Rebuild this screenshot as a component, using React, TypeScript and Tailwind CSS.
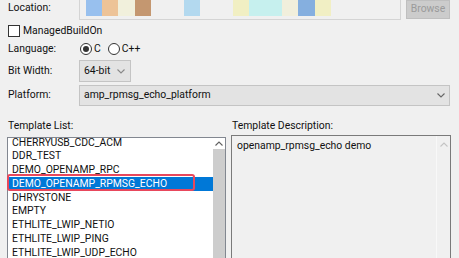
const templates = [
  "CHERRYUSB_CDC_ACM",
  "DDR_TEST",
  "DEMO_OPENAMP_RPC",
  "DEMO_OPENAMP_RPMSG_ECHO",
  "DHRYSTONE",
  "EMPTY",
  "ETHLITE_LWIP_NETIO",
  "ETHLITE_LWIP_PING",
  "ETHLITE_LWIP_UDP_ECHO",
];

// blurred path blocks in the location field: [width, colour]
const pathBlocks: [number, string][] = [
  [16, "#98c0ee"],
  [16, "#edc397"],
  [17, "#f1f0dc"],
  [16, "#c49770"],
  [33, "transparent"],
  [16, "#b3d9ef"],
  [33, "transparent"],
  [16, "#f1efc3"],
  [33, "#c6f0ee"],
  [16, "#f1efdc"],
  [17, "#85afdf"],
  [16, "#f1efc4"],
];

function Chevron({ up = false, className = "" }: { up?: boolean; className?: string }) {
  return (
    <svg width="8" height="5" viewBox="0 0 8 5" className={className}>
      <path
        d={up ? "M0.5 4.5 L4 1 L7.5 4.5" : "M0.5 0.5 L4 4 L7.5 0.5"}
        fill="none"
        stroke="currentColor"
        strokeWidth="1.1"
      />
    </svg>
  );
}

function Radio({ checked }: { checked: boolean }) {
  return (
    <span className="flex h-[12px] w-[12px] items-center justify-center rounded-full border border-[#333] bg-white">
      {checked && <span className="h-[6px] w-[6px] rounded-full bg-[#333]" />}
    </span>
  );
}

export default function App() {
  return (
    <div
      className="relative h-[258px] w-[459px] overflow-hidden bg-[#f0f0f0] text-[10.4px] leading-none text-[#111]"
      style={{ fontFamily: 'Roboto, sans-serif' }}
    >
      {/* Location */}
      <div className="flex h-[20px]">
        <div className="w-[79px] pl-[8px] pt-[3px]">Location:</div>
        <div className="flex h-[20px] w-[322px] border-b border-l border-r border-[#d4d4d4] bg-[#f0f0f0] pl-[6px]">
          {pathBlocks.map(([w, c], i) => (
            <span key={i} className="h-[16px]" style={{ width: w, background: c }} />
          ))}
        </div>
        <div className="ml-[5px] flex h-[19px] w-[44px] items-center justify-center border border-[#bfbfbf] bg-[#cccccc] text-[#9b9b9b]">
          Browse
        </div>
      </div>

      {/* ManagedBuildOn */}
      <div className="mt-[4px] flex h-[14px] items-center pl-[8px]">
        <span className="h-[12px] w-[12px] border border-[#333] bg-white" />
        <span className="ml-[3px]">ManagedBuildOn</span>
      </div>

      {/* Language */}
      <div className="mt-[4px] flex h-[14px] items-center">
        <div className="w-[80px] pl-[8px]">Language:</div>
        <Radio checked />
        <span className="ml-[2px]">C</span>
        <span className="ml-[7px]">
          <Radio checked={false} />
        </span>
        <span className="ml-[2px]">C++</span>
      </div>

      {/* Bit Width */}
      <div className="mt-[4px] flex h-[22px] items-center">
        <div className="w-[79px] pl-[8px]">Bit Width:</div>
        <div className="flex h-[22px] w-[52px] items-center justify-between border border-[#c4c4c4] bg-[#e3e3e3] pl-[4px] pr-[5px]">
          <span>64-bit</span>
          <Chevron className="text-[#888]" />
        </div>
      </div>

      {/* Platform */}
      <div className="mt-[3px] flex h-[21px] items-center">
        <div className="w-[79px] pl-[8px]">Platform:</div>
        <div className="flex h-[21px] w-[371px] items-center justify-between border border-[#c4c4c4] bg-[#e3e3e3] pl-[4px] pr-[4px]">
          <span>amp_rpmsg_echo_platform</span>
          <Chevron className="text-[#666]" />
        </div>
      </div>

      {/* Template labels */}
      <div className="mt-[13px] flex h-[14px] items-center">
        <div className="w-[232px] pl-[8px]">Template List:</div>
        <div>Template Description:</div>
      </div>

      {/* Boxes */}
      <div className="mt-[2px] flex">
        <div className="ml-[7px] mt-[2px] flex h-[140px] w-[219px] overflow-hidden border border-[#828790] bg-white">
          <div className="-mt-[2px] flex-1 pl-[1px]">
            {templates.map((t, i) => (
              <div
                key={t}
                className={
                  "flex h-[13.75px] items-center pl-[3px] " +
                  (i === 3 ? "bg-[#0078d7] text-white" : "")
                }
              >
                {t}
              </div>
            ))}
          </div>
          <div className="flex w-[12px] flex-col">
            <div className="flex h-[11px] items-center justify-center text-[#606060]">
              <Chevron up />
            </div>
            <div className="flex-1 bg-[#cdcdcd]" />
          </div>
        </div>

        <div className="ml-[5px] flex h-[140px] w-[220px] border border-[#7a7a7a] bg-[#f0f0f0]">
          <div className="flex-1 pl-[5px] pt-[5px]">openamp_rpmsg_echo demo</div>
          <div className="flex w-[14px] justify-center border-l border-[#f8f8f8] pt-[6px] text-[#c4c4c4]">
            <Chevron up />
          </div>
        </div>
      </div>

      {/* highlight annotation */}
      <div className="absolute left-[7px] top-[174px] h-[17px] w-[188px] rounded-[3px] border-2 border-[#e8485c]" />
    </div>
  );
}
